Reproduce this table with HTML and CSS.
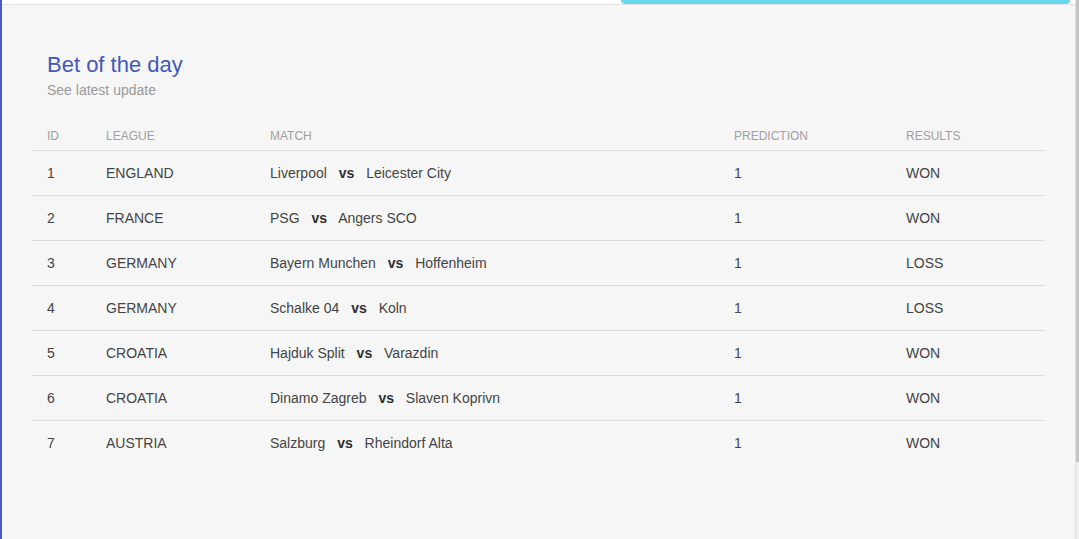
FILE: index.html
```html
<!DOCTYPE html>
<html>
<head>
<meta charset="utf-8">
<link rel="stylesheet" href="styles.css">
</head>
<body>
<div class="page">
  <div class="main">
    <div class="topbar"><div class="tab-indicator"></div></div>
    <div class="card">
      <h1 class="title">Bet of the day</h1>
      <p class="subtitle">See latest update</p>
      <table class="bets">
        <thead>
          <tr>
            <th class="c-id">ID</th>
            <th class="c-league">LEAGUE</th>
            <th class="c-match">MATCH</th>
            <th class="c-pred">PREDICTION</th>
            <th class="c-res">RESULTS</th>
          </tr>
        </thead>
        <tbody>
          <tr><td>1</td><td>ENGLAND</td><td>Liverpool <b class="vs">vs</b> Leicester City</td><td>1</td><td>WON</td></tr>
          <tr><td>2</td><td>FRANCE</td><td>PSG <b class="vs">vs</b> Angers SCO</td><td>1</td><td>WON</td></tr>
          <tr><td>3</td><td>GERMANY</td><td>Bayern Munchen <b class="vs">vs</b> Hoffenheim</td><td>1</td><td>LOSS</td></tr>
          <tr><td>4</td><td>GERMANY</td><td>Schalke 04 <b class="vs">vs</b> Koln</td><td>1</td><td>LOSS</td></tr>
          <tr><td>5</td><td>CROATIA</td><td>Hajduk Split <b class="vs">vs</b> Varazdin</td><td>1</td><td>WON</td></tr>
          <tr><td>6</td><td>CROATIA</td><td>Dinamo Zagreb <b class="vs">vs</b> Slaven Koprivn</td><td>1</td><td>WON</td></tr>
          <tr><td>7</td><td>AUSTRIA</td><td>Salzburg <b class="vs">vs</b> Rheindorf Alta</td><td>1</td><td>WON</td></tr>
        </tbody>
      </table>
    </div>
  </div>
  <div class="scrollbar"><div class="thumb"></div></div>
</div>
</body>
</html>
```

FILE: styles.css
```css
html, body {
  margin: 0;
  padding: 0;
  height: 100%;
}
body {
  font-family: "Liberation Sans", Arial, sans-serif;
  background: #f6f6f6;
  overflow: hidden;
}
.page {
  display: flex;
  min-height: 100vh;
  border-left: 2px solid #4a5cc4;
  box-sizing: border-box;
}
.main {
  flex: 1;
  display: flex;
  flex-direction: column;
  background: #f6f6f6;
}
.topbar {
  height: 4px;
  background: #ffffff;
  border-bottom: 1px solid #e2e2e2;
  display: flex;
  justify-content: flex-end;
  padding-right: 5px;
}
.tab-indicator {
  width: 449px;
  height: 4px;
  background: #67d8ef;
  border-radius: 0 0 4px 4px;
}
.card {
  padding: 47px 30px 0 30px;
}
.title {
  margin: 0;
  padding-left: 15px;
  font-size: 22px;
  line-height: 26px;
  font-weight: normal;
  color: #4458bb;
}
.subtitle {
  margin: 2px 0 0 0;
  padding-left: 15px;
  font-size: 14px;
  line-height: 20px;
  color: #9a9a9a;
}
.bets {
  margin-top: 20px;
  width: 100%;
  border-collapse: collapse;
  font-size: 14px;
  color: #444444;
}
.bets th {
  text-align: left;
  font-weight: normal;
  font-size: 12px;
  line-height: 20px;
  color: #a0a0a0;
  padding: 6px 15px 4px 15px;
  border-bottom: 1px solid #dcdcdc;
}
.bets td {
  padding: 12px 15px;
  line-height: 20px;
  border-bottom: 1px solid #dcdcdc;
}
.bets tbody tr:last-child td {
  border-bottom: none;
}
.c-id { width: 29px; }
.c-league { width: 134px; }
.c-match { width: 434px; }
.c-pred { width: 142px; }
.vs {
  font-weight: bold;
  color: #2e2e2e;
  margin: 0 8px;
}
.scrollbar {
  width: 3px;
  background: #eeeeee;
  border-left: 1px solid #e2e2e2;
}
.thumb {
  height: 462px;
  background: #c4c4c4;
}
```
